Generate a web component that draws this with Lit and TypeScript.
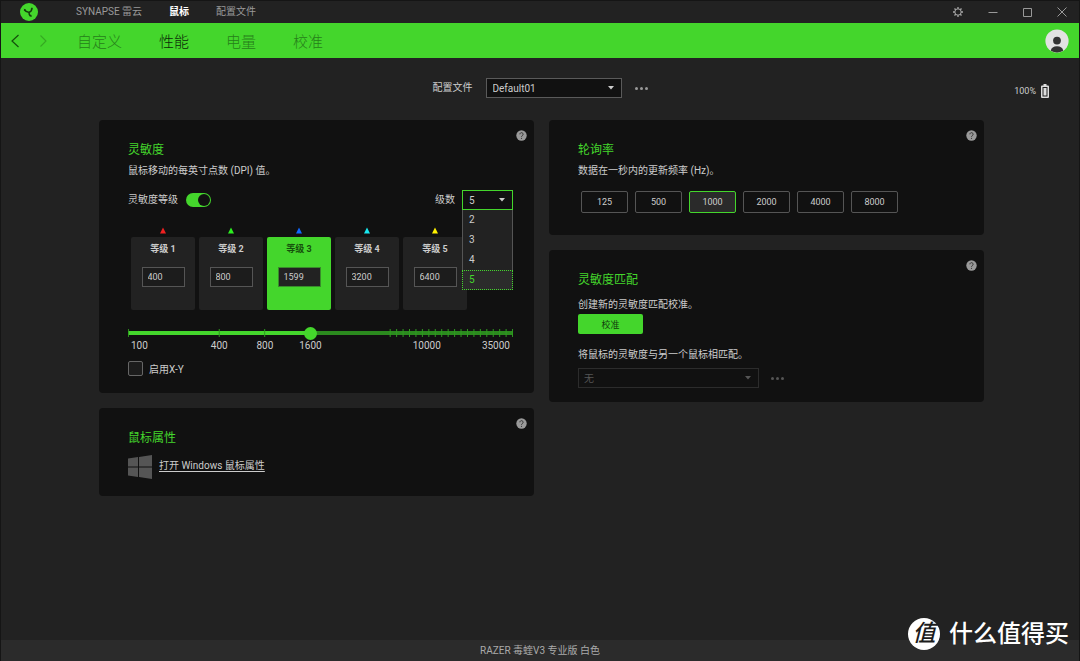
import { LitElement, html, css, svg } from "lit";
import { customElement, property, state } from "lit/decorators.js";
import { classMap } from "lit/directives/class-map.js";

interface Stage {
  dpi: number;
  color: string;
}

const shared = css`
  * {
    box-sizing: border-box;
  }
  button,
  input,
  select {
    font: inherit;
    color: inherit;
    margin: 0;
    outline: none;
  }
  button {
    padding: 0;
    border: 0;
    background: none;
    cursor: pointer;
  }
  svg {
    display: block;
  }
  .select {
    display: grid;
    align-items: center;
  }
  .select > * {
    grid-area: 1 / 1;
  }
  .select select {
    appearance: none;
    width: 100%;
    height: 20px;
    padding: 0 6px;
    background: #111;
    border: 1px solid #5a5a5a;
    border-radius: 0;
  }
  .select .caret {
    justify-self: end;
    margin-right: 8px;
    pointer-events: none;
  }
  .more {
    display: flex;
    gap: 2px;
    align-items: center;
    height: 20px;
  }
  .more i {
    width: 3px;
    height: 3px;
    border-radius: 50%;
    background: #999;
  }
`;

const caret = html`<svg class="caret" width="6" height="4" viewBox="0 0 6 4" aria-hidden="true">
  <path d="M0 0h6L3 3.500z" fill="currentColor" />
</svg>`;

const dots = html`<i></i><i></i><i></i>`;

@customElement("settings-card")
export class SettingsCard extends LitElement {
  @property() heading = "";
  @property({ type: Boolean }) help = false;

  static styles = [
    shared,
    css`
      :host {
        display: grid;
        grid-template-columns: minmax(0, 1fr) 11px;
        column-gap: 3px;
        padding: 10px 7px 0 29px;
        background: #111;
        border-radius: 4px;
      }
      .body {
        padding-top: 11px;
      }
      h2 {
        margin: 0;
        font-size: 12px;
        line-height: 18px;
        font-weight: 400;
        color: #44d62c;
      }
      .help {
        width: 11px;
        height: 11px;
      }
    `,
  ];

  render() {
    return html`
      <div class="body">
        <h2>${this.heading}</h2>
        <slot></slot>
      </div>
      ${this.help
        ? html`<button class="help" aria-label="帮助">
            <svg width="11" height="11" viewBox="0 0 11 11">
              <circle cx="5.5" cy="5.5" r="5.2" fill="#999" />
              <path d="M3.9 4.3a1.6 1.6 0 1 1 2.6 1.2c-.7.5-1 .7-1 1.3" fill="none" stroke="#333" stroke-width="1" />
              <circle cx="5.5" cy="8.3" r=".6" fill="#333" />
            </svg>
          </button>`
        : ""}
    `;
  }
}

@customElement("dpi-panel")
export class DpiPanel extends LitElement {
  @state() private active = 2;
  @state() private count = 5;
  @state() private position = 474;
  @state() private open = true;

  private stages: Stage[] = [
    { dpi: 400, color: "#f02020" },
    { dpi: 800, color: "#2cf020" },
    { dpi: 1599, color: "#1068ff" },
    { dpi: 3200, color: "#18e8f0" },
    { dpi: 6400, color: "#fff200" },
  ];

  private ticks = [0.1, 23.7, 35.5, 47.4, ...Array.from({ length: 20 }, (_, i) => 68.1 + i * 1.673)];

  static styles = [
    shared,
    css`
      :host {
        display: block;
      }
      .desc {
        margin: 4px 0 0;
        line-height: 16px;
      }
      .row {
        display: flex;
        align-items: center;
        height: 20px;
        margin-top: 11px;
        line-height: 20px;
      }
      .switch {
        appearance: none;
        display: flex;
        justify-content: flex-end;
        width: 25px;
        height: 14px;
        margin-left: 8px;
        padding: 1px;
        border-radius: 7px;
        background: #44d62c;
      }
      .switch::before {
        content: "";
        width: 12px;
        height: 12px;
        border-radius: 50%;
        background: #111;
      }
      .switch:not(:checked) {
        justify-content: flex-start;
        background: #555;
      }
      .count-label {
        margin: 0 7px 0 auto;
      }
      .count {
        position: relative;
        width: 51px;
      }
      .count select {
        border-color: #44d62c;
      }
      .list {
        position: absolute;
        z-index: 2;
        top: 20px;
        left: 0;
        right: 0;
        margin: 0;
        padding: 0;
        list-style: none;
        background: #222;
      }
      .list li {
        height: 20px;
        padding-left: 6px;
        line-height: 20px;
        border: 0 solid #555;
        border-width: 0 1px;
        cursor: pointer;
      }
      .list .chosen {
        line-height: 18px;
        color: #44d62c;
        background: #2b2b2b;
        border: 1px dotted #44d62c;
      }
      .stages {
        display: grid;
        grid-template-columns: repeat(5, 64px);
        gap: 4px;
        margin: 17px 0 0 3px;
      }
      .stage {
        display: grid;
        justify-items: center;
        row-gap: 3px;
      }
      .tile {
        display: flex;
        flex-direction: column;
        align-items: center;
        width: 100%;
        height: 73px;
        padding-top: 5px;
        border-radius: 2px;
        background: #222;
        font-size: 9px;
      }
      .tile label {
        line-height: 14px;
        font-weight: 700;
      }
      .tile input {
        width: 43px;
        height: 20px;
        margin-top: 11px;
        padding: 0 5px;
        border: 1px solid #555;
        background: #1c1c1c;
      }
      .tile.active {
        background: #44d62c;
      }
      .tile.active label {
        color: #16500c;
      }
      .tile.active input {
        border-color: #3a8a2c;
        background: #222;
      }
      .slider {
        display: grid;
        align-items: center;
        height: 16px;
        margin-top: 15px;
      }
      .slider > * {
        grid-area: 1 / 1;
        width: 100%;
      }
      .slider input {
        appearance: none;
        height: 16px;
        background: none;
      }
      .slider input::-webkit-slider-thumb {
        appearance: none;
        width: 13px;
        height: 13px;
        border-radius: 50%;
        background: #44d62c;
      }
      .scale {
        display: grid;
        grid-template-columns: 68fr 46fr 45fr 46fr 65fr 56fr 58fr;
        justify-items: center;
        line-height: 10px;
      }
      .scale :first-child {
        justify-self: start;
        margin-left: 3px;
      }
      .scale :nth-child(5) {
        grid-column: 6;
      }
      .scale :last-child {
        justify-self: end;
        margin-right: 3px;
      }
      .xy {
        display: flex;
        align-items: center;
        gap: 6px;
        height: 16px;
        margin: 9px 0 17px;
      }
      .xy input {
        appearance: none;
        width: 15px;
        height: 15px;
        border: 1px solid #666;
        border-radius: 2px;
        background: #1c1c1c;
      }
      .xy input:checked {
        background: #44d62c;
      }
    `,
  ];

  private choose(n: number) {
    this.count = n;
    this.open = false;
  }

  render() {
    const pct = this.position / 10;
    return html`
      <p class="desc">鼠标移动的每英寸点数 (DPI) 值。</p>
      <div class="row">
        <label for="levels">灵敏度等级</label>
        <input id="levels" class="switch" type="checkbox" role="switch" checked />
        <label class="count-label" for="count">级数</label>
        <div class="select count">
          <select
            id="count"
            @mousedown=${(e: Event) => {
              e.preventDefault();
              this.open = !this.open;
            }}
          >
            <option>${this.count}</option>
          </select>
          ${caret}
          ${this.open
            ? html`<ul class="list" role="listbox" aria-label="级数">
                ${[2, 3, 4, 5].map(
                  (n) => html`<li
                    role="option"
                    aria-selected=${n === this.count}
                    class=${classMap({ chosen: n === this.count })}
                    @click=${() => this.choose(n)}
                  >
                    ${n}
                  </li>`
                )}
              </ul>`
            : ""}
        </div>
      </div>
      <div class="stages">
        ${this.stages.slice(0, this.count).map(
          (s, i) => html`<div class="stage" @click=${() => (this.active = i)}>
            <svg width="6" height="7" viewBox="0 0 6 7" aria-hidden="true">
              <path d="M3 .5 6 6.500H0z" fill=${s.color} />
            </svg>
            <div class=${classMap({ tile: true, active: i === this.active })}>
              <label for="stage-${i}">等级 ${i + 1}</label>
              <input id="stage-${i}" type="text" .value=${String(s.dpi)} />
            </div>
          </div>`
        )}
      </div>
      <div class="slider">
        <svg height="16" aria-hidden="true">
          <rect y="6" width="100%" height="4" fill="#2b8a1e" />
          <rect y="6" width="${pct}%" height="4" fill="#44d62c" />
          ${this.ticks.map((t) => svg`<line x1="${t}%" x2="${t}%" y1="4" y2="12" stroke="#2f9a20" />`)}
        </svg>
        <input
          type="range"
          min="0"
          max="1000"
          aria-label="DPI"
          .value=${String(this.position)}
          @input=${(e: Event) => (this.position = Number((e.target as HTMLInputElement).value))}
        />
      </div>
      <div class="scale">
        <span>100</span><span>400</span><span>800</span><span>1600</span><span>10000</span><span>35000</span>
      </div>
      <div class="xy">
        <input id="xy" type="checkbox" />
        <label for="xy">启用X-Y</label>
      </div>
    `;
  }
}

@customElement("app-root")
export class AppRoot extends LitElement {
  @state() private rate = 1000;

  static styles = [
    shared,
    css`
      :host {
        position: relative;
        box-sizing: border-box;
        display: flex;
        flex-direction: column;
        min-height: 100vh;
        background: #222;
        color: #ccc;
        border: 1px solid #151515;
        border-bottom: 0;
        font-family: Roboto, "Noto Sans CJK SC", sans-serif;
        font-size: 10px;
      }
      .titlebar {
        display: flex;
        align-items: center;
        height: 22px;
        padding: 0 11px 0 19px;
      }
      .tabs {
        display: flex;
        gap: 27px;
        height: 22px;
        margin: 0 auto 0 38px;
        line-height: 22px;
      }
      .tabs a {
        color: #999;
        text-decoration: none;
      }
      .tabs .current {
        color: #fff;
        font-weight: 700;
      }
      .window {
        display: flex;
        gap: 23px;
      }
      .nav {
        display: flex;
        align-items: center;
        height: 35px;
        padding: 0 10px 0 9px;
        background: #44d62c;
      }
      .arrows {
        display: flex;
        gap: 18px;
      }
      .pages {
        display: flex;
        gap: 37px;
        margin: 0 auto 0 29px;
        font-size: 15px;
        font-weight: 300;
      }
      .pages a {
        color: #26801a;
        text-decoration: none;
      }
      .pages .current {
        color: #0c2a08;
      }
      main {
        flex: 1;
        padding-top: 20px;
      }
      .profile {
        display: grid;
        grid-template-columns: 1fr auto 1fr;
        align-items: center;
        padding: 0 30px;
      }
      .picker {
        grid-column: 2;
        display: flex;
        align-items: center;
      }
      .picker label {
        height: 20px;
        line-height: 20px;
      }
      .picker .select {
        width: 136px;
        margin: 0 13px;
      }
      .battery {
        display: flex;
        align-items: center;
        justify-self: end;
        gap: 5px;
        padding-top: 5px;
        font-size: 9px;
      }
      .cards {
        display: grid;
        grid-template-columns: 1fr 1fr;
        gap: 15px;
        padding: 22px 95px 20px 98px;
      }
      .column {
        display: flex;
        flex-direction: column;
        gap: 15px;
      }
      p {
        margin: 0;
        line-height: 16px;
      }
      .poll-desc {
        margin-top: 4px;
      }
      .rates {
        display: flex;
        gap: 7px;
        margin: 12px 0 22px 3px;
        font-size: 9px;
      }
      .rates button {
        width: 47px;
        height: 22px;
        border: 1px solid #555;
        border-radius: 2px;
      }
      .rates .chosen {
        border-color: #44d62c;
        background: #2a2a2a;
      }
      .match-desc {
        margin-top: 8px;
      }
      .calibrate {
        width: 65px;
        height: 20px;
        margin: 1px 0 13px;
        border-radius: 2px;
        background: #44d62c;
        color: #123c0c;
        font-size: 9px;
      }
      .match {
        display: flex;
        gap: 12px;
        margin: 5px 0 14px;
        color: #555;
      }
      .match .select {
        width: 181px;
      }
      .match select {
        border-color: #2c2c2c;
        padding: 0 5px;
        opacity: 1;
      }
      .match .more i {
        background: #555;
      }
      .windows {
        display: flex;
        gap: 7px;
        margin: 8px 0 17px;
      }
      .windows a {
        color: #ccc;
        line-height: 22px;
        text-underline-offset: 2px;
      }
      footer {
        height: 21px;
        line-height: 21px;
        background: #2b2b2b;
        text-align: center;
        color: #aaa;
      }
      .watermark {
        position: absolute;
        right: 10px;
        bottom: 11px;
        display: flex;
        align-items: center;
        gap: 9px;
        color: #fff;
        font-size: 24px;
        line-height: 32px;
        font-weight: 500;
      }
      .seal {
        width: 32px;
        height: 32px;
        border-radius: 50%;
        background: #fff;
        color: #1c1c1c;
        text-align: center;
        font-size: 23px;
        line-height: 32px;
        font-style: italic;
      }
    `,
  ];

  render() {
    return html`
      <header class="titlebar">
        <svg width="18" height="18" viewBox="0 0 18 18" aria-label="Razer">
          <circle cx="9" cy="9" r="9" fill="#44d62c" />
          <path d="M4.300 6.800C5.600 8.600 7 9.300 8.900 9.200c1.700-.1 2.700-1.400 2.900-3.400M8.900 9.200c0 1.700.6 2.900 1.700 3.900" fill="none" stroke="#14380e" stroke-width="1.500" />
          <path d="M3.600 5.800l2.200.5-.8 1.800zM10.700 5.900l1.300-1.700 1.100 2.100zM9.500 13l1.900-1.200.3 2.300z" fill="#14380e" />
        </svg>
        <nav class="tabs">
          <a href="#synapse">SYNAPSE 雷云</a>
          <a href="#mouse" class="current">鼠标</a>
          <a href="#profiles">配置文件</a>
        </nav>
        <div class="window">
          <button aria-label="设置">
            <svg width="12" height="12" viewBox="0 0 12 12" fill="none" stroke="#aaa">
              <circle cx="6" cy="6" r="3.2" />
              <path d="M6 1v1.8M6 9.2V11M1 6h1.8M9.2 6H11M2.5 2.5l1.2 1.2M8.3 8.3l1.2 1.2M2.5 9.5l1.2-1.2M8.3 3.7l1.2-1.2" stroke-width="1.3" />
            </svg>
          </button>
          <button aria-label="最小化">
            <svg width="12" height="12" viewBox="0 0 12 12"><path d="M1.500 6.5h9" stroke="#999" /></svg>
          </button>
          <button aria-label="最大化">
            <svg width="11" height="12" viewBox="0 0 11 12"><path d="M1.5 2.5h8v8h-8z" fill="none" stroke="#999" /></svg>
          </button>
          <button aria-label="关闭">
            <svg width="12" height="12" viewBox="0 0 12 12"><path d="M1.5 1.5l9 9M10.5 1.5l-9 9" stroke="#999" /></svg>
          </button>
        </div>
      </header>

      <div class="nav">
        <div class="arrows">
          <button aria-label="后退">
            <svg width="10" height="14" viewBox="0 0 10 14"><path d="M8.5 1 2 7l6.5 6" fill="none" stroke="#14500c" stroke-width="1.2" /></svg>
          </button>
          <button aria-label="前进">
            <svg width="10" height="14" viewBox="0 0 10 14"><path d="M2.5 1.5 8 7l-5.5 5.5" fill="none" stroke="#35a822" stroke-width="1.1" /></svg>
          </button>
        </div>
        <nav class="pages">
          <a href="#customize">自定义</a>
          <a href="#performance" class="current">性能</a>
          <a href="#power">电量</a>
          <a href="#calibration">校准</a>
        </nav>
        <button aria-label="账户">
          <svg width="24" height="24" viewBox="0 0 24 24">
            <circle cx="12" cy="12" r="11.6" fill="#e2e2e2" />
            <circle cx="12" cy="11.6" r="3.9" fill="#333" />
            <path d="M5.8 21.8c.3-3 2.7-4.6 6.2-4.6s5.900 1.600 6.200 4.600A11.600 11.600 0 0 1 12 23.600a11.600 11.600 0 0 1-6.200-1.800z" fill="#333" />
          </svg>
        </button>
      </div>

      <main>
        <div class="profile">
          <div class="picker">
            <label for="profile">配置文件</label>
            <div class="select">
              <select id="profile">
                <option>Default01</option>
              </select>
              ${caret}
            </div>
            <button class="more" aria-label="更多">${dots}</button>
          </div>
          <div class="battery">
            100%
            <svg width="8" height="14" viewBox="0 0 8 14" aria-hidden="true">
              <path d="M2.500 0h3v1.500H7A1 1 0 0 1 8 2.500V13a1 1 0 0 1-1 1H1a1 1 0 0 1-1-1V2.500a1 1 0 0 1 1-1h1.500z" fill="#ddd" />
              <path d="M1.500 3h5v9.500h-5z" fill="#222" />
              <path d="M2.500 4h3v7.500h-3z" fill="#ddd" />
            </svg>
          </div>
        </div>

        <div class="cards">
          <div class="column">
            <settings-card heading="灵敏度" help><dpi-panel></dpi-panel></settings-card>
            <settings-card heading="鼠标属性" help>
              <div class="windows">
                <svg width="24" height="24" viewBox="0 0 24 24" fill="#555" aria-hidden="true">
                  <path d="M0 3.500 10 2v9.500H0zM11 1.900 24 0v11.500H11zM0 12.500h10V22L0 20.500zM11 12.500h13V24l-13-1.900z" />
                </svg>
                <a href="#windows">打开 Windows 鼠标属性</a>
              </div>
            </settings-card>
          </div>
          <div class="column">
            <settings-card heading="轮询率" help>
              <p class="poll-desc">数据在一秒内的更新频率 (Hz)。</p>
              <div class="rates">
                ${[125, 500, 1000, 2000, 4000, 8000].map(
                  (r) => html`<button
                    class=${classMap({ chosen: r === this.rate })}
                    aria-pressed=${r === this.rate}
                    @click=${() => (this.rate = r)}
                  >
                    ${r}
                  </button>`
                )}
              </div>
            </settings-card>
            <settings-card heading="灵敏度匹配" help>
              <p class="match-desc">创建新的灵敏度匹配校准。</p>
              <button class="calibrate">校准</button>
              <p><label for="match">将鼠标的灵敏度与另一个鼠标相匹配。</label></p>
              <div class="match">
                <div class="select">
                  <select id="match" disabled>
                    <option>无</option>
                  </select>
                  ${caret}
                </div>
                <button class="more" aria-label="更多" disabled>${dots}</button>
              </div>
            </settings-card>
          </div>
        </div>
      </main>

      <footer>RAZER 毒蝰V3 专业版 白色</footer>
      <div class="watermark"><span class="seal">值</span>什么值得买</div>
    `;
  }
}
